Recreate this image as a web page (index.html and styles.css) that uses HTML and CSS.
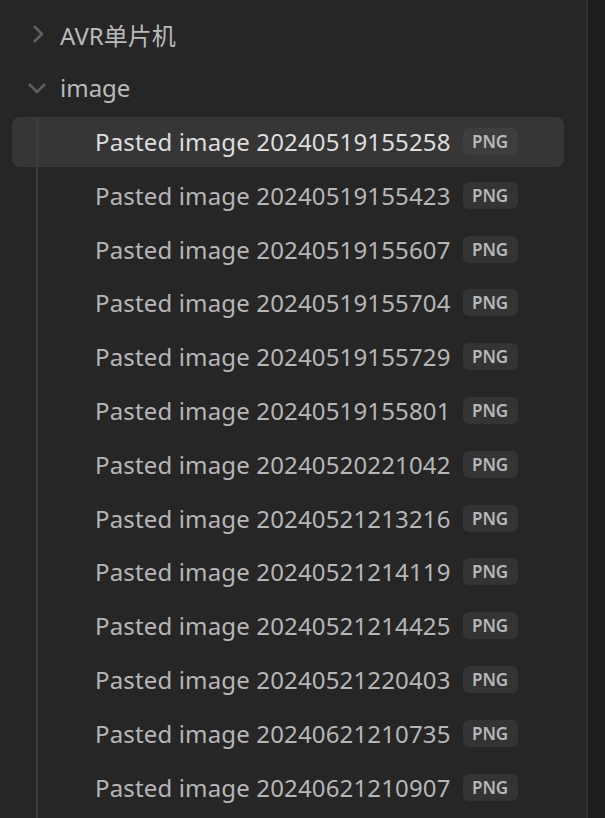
FILE: index.html
```html
<!DOCTYPE html>
<html lang="en">
<head>
  <meta charset="UTF-8">
  <title>Files</title>
  <link rel="stylesheet" href="styles.css">
</head>
<body>
  <div class="layout">
    <nav class="sidebar">
      <div class="tree-row folder">
        <svg class="chevron" width="18" height="20" viewBox="0 0 18 20"><path d="M5 2 L13 10 L5 18" fill="none" stroke="currentColor" stroke-width="2.6"/></svg>
        <span class="label">AVR单片机</span>
      </div>
      <div class="tree-row folder">
        <svg class="chevron open" width="20" height="14" viewBox="0 0 20 14"><path d="M2 3 L10 11 L18 3" fill="none" stroke="currentColor" stroke-width="2.6"/></svg>
        <span class="label">image</span>
      </div>
      <div class="children">
        <div class="tree-row file active"><span class="label">Pasted image 20240519155258</span><span class="tag">PNG</span></div>
        <div class="tree-row file"><span class="label">Pasted image 20240519155423</span><span class="tag">PNG</span></div>
        <div class="tree-row file"><span class="label">Pasted image 20240519155607</span><span class="tag">PNG</span></div>
        <div class="tree-row file"><span class="label">Pasted image 20240519155704</span><span class="tag">PNG</span></div>
        <div class="tree-row file"><span class="label">Pasted image 20240519155729</span><span class="tag">PNG</span></div>
        <div class="tree-row file"><span class="label">Pasted image 20240519155801</span><span class="tag">PNG</span></div>
        <div class="tree-row file"><span class="label">Pasted image 20240520221042</span><span class="tag">PNG</span></div>
        <div class="tree-row file"><span class="label">Pasted image 20240521213216</span><span class="tag">PNG</span></div>
        <div class="tree-row file"><span class="label">Pasted image 20240521214119</span><span class="tag">PNG</span></div>
        <div class="tree-row file"><span class="label">Pasted image 20240521214425</span><span class="tag">PNG</span></div>
        <div class="tree-row file"><span class="label">Pasted image 20240521220403</span><span class="tag">PNG</span></div>
        <div class="tree-row file"><span class="label">Pasted image 20240621210735</span><span class="tag">PNG</span></div>
        <div class="tree-row file"><span class="label">Pasted image 20240621210907</span><span class="tag">PNG</span></div>
      </div>
    </nav>
    <div class="pane"></div>
  </div>
</body>
</html>
```

FILE: styles.css
```css
html, body {
  margin: 0;
  padding: 0;
  height: 100%;
  overflow: hidden;
}

body {
  font-family: "Noto Sans", "Noto Sans CJK SC", sans-serif;
  background: #1e1e1e;
  color: #b8b8b8;
}

.layout {
  display: flex;
  height: 100%;
}

.sidebar {
  width: 588px;
  background: #262626;
  border-right: 2px solid #333333;
  padding: 9px 22px 0 12px;
  box-sizing: border-box;
  display: flex;
  flex-direction: column;
  gap: 3.8px;
  overflow: hidden;
}

.pane {
  flex: 1;
  background: #1e1e1e;
}

.tree-row {
  height: 50px;
  display: flex;
  align-items: center;
  border-radius: 8px;
  font-size: 24px;
  flex-shrink: 0;
}

.folder .chevron {
  color: #5f5f5f;
  margin-left: 17px;
  margin-right: 13px;
}

.folder .chevron.open {
  margin-left: 15px;
  margin-right: 13px;
}

.folder .label {
  color: #bababa;
}

.children {
  position: relative;
  display: flex;
  flex-direction: column;
  gap: 3.8px;
}

.children::before {
  content: "";
  position: absolute;
  left: 24px;
  top: 0;
  bottom: -400px;
  width: 2px;
  background: #3c3c3c;
  z-index: 1;
}

.file {
  padding-left: 83px;
}

.file .label {
  color: #b6b6b6;
  letter-spacing: 0.15px;
}

.file.active {
  background: #363636;
}

.file.active .label {
  color: #dedede;
}

.tag {
  margin-left: 12px;
  width: 55px;
  height: 27px;
  border-radius: 6px;
  background: #343434;
  color: #b8b8b8;
  font-size: 17px;
  font-weight: 600;
  display: flex;
  align-items: center;
  justify-content: center;
}

.file.active .tag {
  background: #3e3e3e;
}
```
